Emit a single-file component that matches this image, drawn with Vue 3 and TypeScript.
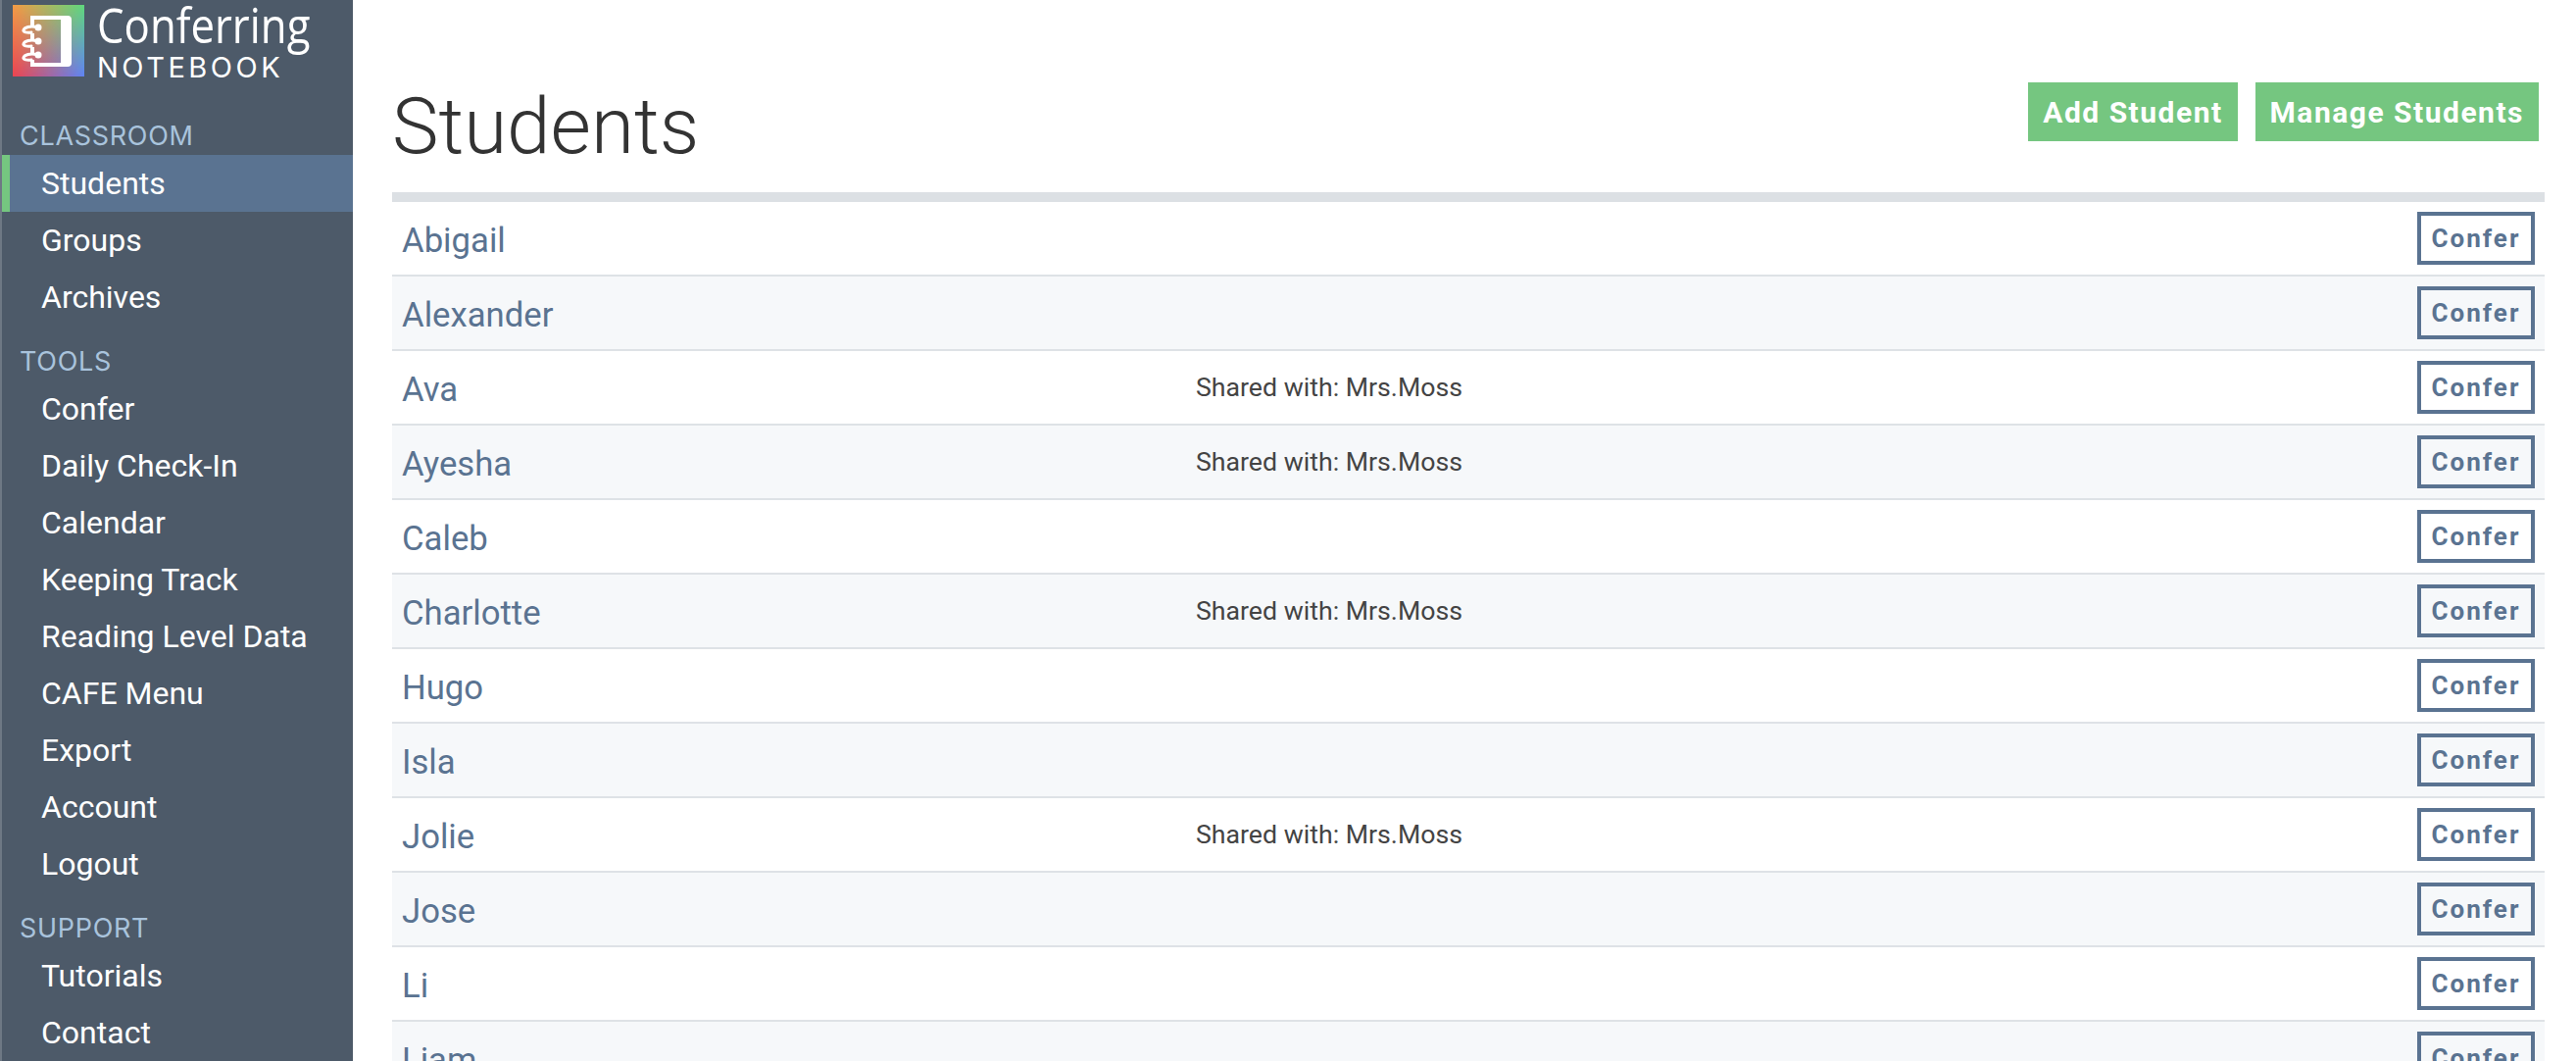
<script setup lang="ts">
interface Student { name: string; shared?: string }
const classroom: string[] = ['Students', 'Groups', 'Archives']
const tools: string[] = ['Confer', 'Daily Check-In', 'Calendar', 'Keeping Track', 'Reading Level Data', 'CAFE Menu', 'Export', 'Account', 'Logout']
const support: string[] = ['Tutorials', 'Contact']
const students: Student[] = [
  { name: 'Abigail' },
  { name: 'Alexander' },
  { name: 'Ava', shared: 'Mrs.Moss' },
  { name: 'Ayesha', shared: 'Mrs.Moss' },
  { name: 'Caleb' },
  { name: 'Charlotte', shared: 'Mrs.Moss' },
  { name: 'Hugo' },
  { name: 'Isla' },
  { name: 'Jolie', shared: 'Mrs.Moss' },
  { name: 'Jose' },
  { name: 'Li' },
  { name: 'Liam' },
]
</script>

<template>
  <div class="app">
    <aside class="sidebar">
      <div class="brand">
        <div class="logo-tile">
          <svg class="logo-book" viewBox="0 0 73 73" width="73" height="73" aria-hidden="true">
            <path fill="#fff" fill-rule="evenodd" d="M18 11H56q4 0 4 4V59q0 4-4 4H18V59H49V15H18Z" />
            <path fill="#fff" d="M18 11h4v11h-4ZM18 29h4v7h-4ZM18 43h4v7h-4ZM18 56h4v7h-4Z" />
            <g fill="none" stroke="#fff" stroke-width="3" stroke-linecap="round">
              <path d="M24 22.500C18 21 12 23 11 25.500C10 28 15 28.500 19 28" />
              <path d="M24 36.500C18 35 12 37 11 39.500C10 42 15 42.500 19 42" />
              <path d="M24 50.500C18 49 12 51 11 53.500C10 56 15 56.500 19 56" />
            </g>
            <circle cx="26" cy="23" r="3.500" fill="#fff" />
            <circle cx="26" cy="37" r="3.500" fill="#fff" />
            <circle cx="26" cy="51" r="3.500" fill="#fff" />
          </svg>
        </div>
        <div class="wordmark">
          <span class="word-top">Conferring</span>
          <span class="word-bottom">NOTEBOOK</span>
        </div>
      </div>

      <div class="section-label">CLASSROOM</div>
      <a v-for="(item, i) in classroom" :key="item" class="nav-item" :class="{ active: i === 0 }">{{ item }}</a>
      <div class="section-label">TOOLS</div>
      <a v-for="item in tools" :key="item" class="nav-item">{{ item }}</a>
      <div class="section-label">SUPPORT</div>
      <a v-for="item in support" :key="item" class="nav-item">{{ item }}</a>
    </aside>

    <main class="main">
      <header class="page-head">
        <h1 class="title">Students</h1>
        <div class="actions">
          <a class="btn-green">Add Student</a>
          <a class="btn-green">Manage Students</a>
        </div>
      </header>
      <div class="list">
        <div v-for="(s, i) in students" :key="s.name" class="row" :class="{ odd: i % 2 === 1 }">
          <a class="name">{{ s.name }}</a>
          <div class="shared">
            <template v-if="s.shared">Shared with: {{ s.shared }}</template>
          </div>
          <a class="btn-confer">Confer</a>
        </div>
      </div>
    </main>
  </div>
</template>

<style>
html, body { margin: 0; height: 100%; overflow: hidden; background: #fff; }
</style>

<style scoped>
.app {
  display: flex;
  height: 1082px;
  overflow: hidden;
  font-family: Roboto, "Liberation Sans", sans-serif;
}
.sidebar {
  flex: 0 0 360px;
  box-sizing: border-box;
  height: 1082px;
  background: #4d5a69;
  border-left: 2px solid #6e7884;
  display: flex;
  flex-direction: column;
  overflow: hidden;
}
.brand {
  flex: 0 0 102px;
  box-sizing: border-box;
  height: 102px;
  display: flex;
  align-items: flex-start;
  padding: 5px 0 0 11px;
  gap: 13px;
}
.logo-tile {
  width: 73px;
  height: 73px;
  flex: 0 0 73px;
  position: relative;
  background: linear-gradient(90deg, #ee4450, #5f84f5);
  overflow: hidden;
}
.logo-tile::before {
  content: "";
  position: absolute;
  inset: 0;
  background: linear-gradient(90deg, #f49b45, #5ed87c);
  -webkit-mask-image: linear-gradient(180deg, #000, transparent);
  mask-image: linear-gradient(180deg, #000, transparent);
}
.logo-book { position: absolute; left: 0; top: 0; }
.wordmark {
  display: flex;
  flex-direction: column;
  color: #fff;
  line-height: 1;
  margin-top: -2px;
}
.word-top {
  font-family: "Open Sans", sans-serif;
  font-weight: 400;
  font-size: 50px;
  height: 44px;
  line-height: 44px;
  transform: scaleX(0.875);
  transform-origin: left center;
  white-space: nowrap;
}
.word-bottom {
  font-family: Inter, sans-serif;
  font-weight: 400;
  font-size: 29px;
  line-height: 26px;
  letter-spacing: 3.500px;
  margin-top: 9px;
  white-space: nowrap;
}
.section-label {
  flex: 0 0 56px;
  height: 56px;
  box-sizing: border-box;
  padding: 22px 0 0 18px;
  font-family: Inter, sans-serif;
  font-size: 27px;
  line-height: 30px;
  letter-spacing: 0.700px;
  color: #a9c3dc;
}
.nav-item {
  flex: 0 0 58px;
  height: 58px;
  box-sizing: border-box;
  padding-left: 40px;
  display: flex;
  align-items: center;
  font-size: 32px;
  color: #fff;
  white-space: nowrap;
}
.nav-item.active {
  background: #5a7391;
  margin-left: -2px;
  padding-left: 32px;
  border-left: 10px solid #75c680;
}
.main {
  flex: 1 1 auto;
  min-width: 0;
  box-sizing: border-box;
  padding: 0 32px 0 40px;
}
.page-head {
  height: 196px;
  box-sizing: border-box;
  display: flex;
  justify-content: space-between;
  align-items: flex-start;
}
.title {
  margin: 81px 0 0 0;
  font-weight: 300;
  font-size: 80px;
  line-height: 96px;
  color: #333;
}
.actions {
  display: flex;
  gap: 18px;
  margin: 84px 6px 0 0;
}
.btn-green {
  height: 60px;
  box-sizing: border-box;
  padding: 0 15px;
  display: flex;
  align-items: center;
  background: #75c680;
  color: #fff;
  font-weight: 700;
  font-size: 30px;
  letter-spacing: 1.500px;
  white-space: nowrap;
}
.list {
  border-top: 10px solid #dce0e4;
}
.row {
  height: 76px;
  box-sizing: border-box;
  border-bottom: 2px solid #dee2e6;
  display: flex;
  align-items: center;
  padding: 0 10px;
  background: #fff;
}
.row.odd { background: #f6f8fa; }
.name {
  flex: 0 0 810px;
  font-size: 34.700px;
  color: #5a7391;
  margin-top: 4px;
}
.shared {
  flex: 1 1 auto;
  font-size: 26.700px;
  color: #444;
}
.btn-confer {
  width: 120px;
  height: 54px;
  box-sizing: border-box;
  border: 4px solid #5a7391;
  display: flex;
  align-items: center;
  justify-content: center;
  font-weight: 700;
  font-size: 26px;
  letter-spacing: 2px;
  color: #5a7391;
}
</style>
